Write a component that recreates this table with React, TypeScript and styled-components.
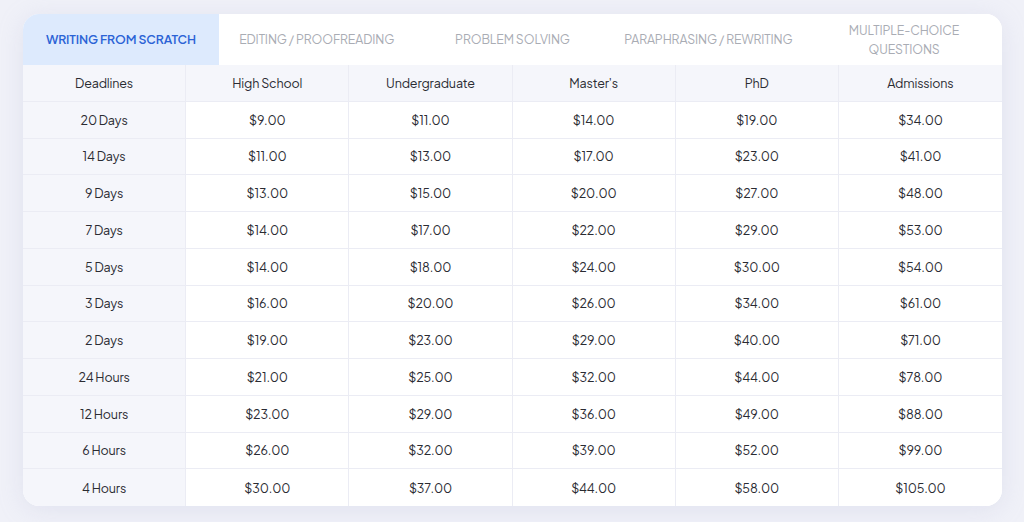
import React from "react";
import styled, { createGlobalStyle } from "styled-components";

const Global = createGlobalStyle`
  html, body { margin: 0; padding: 0; background: #f0f1f8; }
  body { font-family: "Plus Jakarta Sans", Inter, "Noto Sans", sans-serif; }
`;

const Page = styled.div`
  width: 1024px;
  height: 522px;
  box-sizing: border-box;
  padding: 14px 22px 16px 23px;
  background: #f0f1f8;
`;

const Card = styled.div`
  width: 979px;
  background: #ffffff;
  border-radius: 16px;
  overflow: hidden;
  box-shadow: 0 4px 24px rgba(180, 185, 215, 0.25);
`;

const Tabs = styled.div`
  display: grid;
  grid-template-columns: repeat(5, 1fr);
  height: 51px;
`;

const Tab = styled.div<{ $active?: boolean }>`
  display: flex;
  align-items: center;
  justify-content: center;
  text-align: center;
  padding: 0 12px;
  font-size: 12.3px;
  line-height: 19px;
  letter-spacing: -0.1px;
  text-transform: uppercase;
  font-weight: ${(p) => (p.$active ? 600 : 400)};
  color: ${(p) => (p.$active ? "#2b63d6" : "#a9acb4")};
  background: ${(p) => (p.$active ? "#ddeafd" : "#ffffff")};
`;

const Table = styled.div`
  display: grid;
  grid-template-columns: repeat(6, 1fr);
  grid-auto-rows: 36.75px;
`;

const Cell = styled.div<{ $head?: boolean; $first?: boolean; $last?: boolean; $lastRow?: boolean }>`
  display: flex;
  align-items: center;
  justify-content: center;
  font-size: 12.5px;
  letter-spacing: -0.15px;
  color: #2a2b32;
  background: ${(p) => (p.$head || p.$first ? "#f5f6fb" : "#ffffff")};
  border-right: ${(p) => (p.$last ? "none" : "1px solid #ebecf4")};
  border-bottom: ${(p) => (p.$lastRow ? "none" : "1px solid #ebecf4")};
`;

const tabs = [
  "Writing from scratch",
  "Editing / proofreading",
  "Problem solving",
  "Paraphrasing / rewriting",
  "Multiple-choice questions",
];

const head = ["Deadlines", "High School", "Undergraduate", "Master's", "PhD", "Admissions"];

const rows: [string, number[]][] = [
  ["20 Days", [9, 11, 14, 19, 34]],
  ["14 Days", [11, 13, 17, 23, 41]],
  ["9 Days", [13, 15, 20, 27, 48]],
  ["7 Days", [14, 17, 22, 29, 53]],
  ["5 Days", [14, 18, 24, 30, 54]],
  ["3 Days", [16, 20, 26, 34, 61]],
  ["2 Days", [19, 23, 29, 40, 71]],
  ["24 Hours", [21, 25, 32, 44, 78]],
  ["12 Hours", [23, 29, 36, 49, 88]],
  ["6 Hours", [26, 32, 39, 52, 99]],
  ["4 Hours", [30, 37, 44, 58, 105]],
];

export default function App() {
  return (
    <Page>
      <Global />
      <Card>
        <Tabs>
          {tabs.map((t, i) => (
            <Tab key={t} $active={i === 0}>
              {t}
            </Tab>
          ))}
        </Tabs>
        <Table>
          {head.map((h, i) => (
            <Cell key={h} $head $last={i === 5}>
              {h}
            </Cell>
          ))}
          {rows.map(([label, prices], r) => {
            const lastRow = r === rows.length - 1;
            return (
              <React.Fragment key={label}>
                <Cell $first $lastRow={lastRow}>
                  {label}
                </Cell>
                {prices.map((p, i) => (
                  <Cell key={i} $last={i === 4} $lastRow={lastRow}>
                    ${p.toFixed(2)}
                  </Cell>
                ))}
              </React.Fragment>
            );
          })}
        </Table>
      </Card>
    </Page>
  );
}
